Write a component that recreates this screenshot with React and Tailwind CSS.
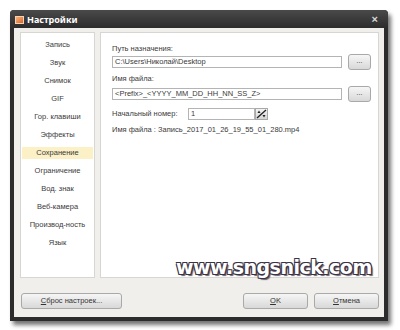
import React from 'react';

const menu = [
  'Запись',
  'Звук',
  'Снимок',
  'GIF',
  'Гор. клавиши',
  'Эффекты',
  'Сохранение',
  'Ограничение',
  'Вод. знак',
  'Веб-камера',
  'Производ-ность',
  'Язык',
];

const btn =
  'h-[16px] rounded-[3px] border border-[#a9a9a9] bg-gradient-to-b from-[#f6f6f6] to-[#d8d8d8] text-[7.5px] text-[#333] flex items-center justify-center';

const DotsButton = () => (
  <div className={`${btn} w-[23px] h-[15px] text-[7px] leading-none pb-[2px]`}>...</div>
);

const App = () => {
  return (
    <div className="relative w-[400px] h-[330px] bg-white pl-[10px] pt-[10px] font-['Liberation_Sans',sans-serif] text-[#3a3a3a]">
      {/* Window */}
      <div className="w-[378px] h-[311px] bg-[#2c2c2c] rounded-t-[4px] shadow-[3px_4px_4px_rgba(0,0,0,0.55)] flex flex-col px-[4px] pb-[4px]">
        {/* Title bar */}
        <div className="h-[18px] flex items-center bg-gradient-to-b from-[#4a4a4a] to-[#2c2c2c] -mx-[4px] px-[5px] rounded-t-[4px]">
          <div className="w-[9px] h-[8px] bg-gradient-to-br from-[#f6b27a] to-[#d8642a] border border-[#f3d2b0] mr-[3px] mt-[1px]" />
          <span className="text-[9px] font-bold text-white leading-none font-['Noto_Sans',sans-serif]">Настройки</span>
          <span className="ml-auto mr-[5px] text-[11px] font-bold text-[#d8d8d8] leading-none">×</span>
        </div>

        {/* Body */}
        <div className="flex-1 bg-[#f0efeb] flex flex-col pl-[6px] pr-[5px] pt-[4px]">
          <div className="flex gap-[5px] h-[246px]">
            {/* Left list */}
            <div className="w-[75px] h-full bg-white border border-[#d6d6d2] pt-[3px] px-[1px]">
              {menu.map((item) => (
                <div key={item} className="h-[18px] flex items-center">
                  <div
                    className={`w-full h-[12px] flex items-center justify-center text-[7.5px] leading-none ${
                      item === 'Сохранение' ? 'bg-[#fbf0c6]' : ''
                    }`}
                  >
                    {item}
                  </div>
                </div>
              ))}
            </div>

            {/* Right content */}
            <div className="flex-1 h-full bg-white border border-[#d6d6d2] pl-[11px] pr-[7px] flex flex-col text-[7.5px] whitespace-nowrap">
              <div className="mt-[11px] h-[10px] leading-[10px]">Путь назначения:</div>
              <div className="h-[15px] flex items-center gap-[6px]">
                <div className="flex-1 h-[12px] border border-[#b4b4b4] bg-white px-[2px] leading-[10px]">
                  C:\Users\Николай\Desktop
                </div>
                <DotsButton />
              </div>

              <div className="mt-[5px] h-[10px] leading-[10px]">Имя файла:</div>
              <div className="mt-[2px] h-[15px] flex items-center gap-[6px]">
                <div className="flex-1 h-[12px] border border-[#b4b4b4] bg-white px-[2px] leading-[10px]">
                  {'<Prefix>_<YYYY_MM_DD_HH_NN_SS_Z>'}
                </div>
                <DotsButton />
              </div>

              <div className="mt-[7px] h-[12px] flex items-center">
                <span className="w-[76px] leading-[10px]">Начальный номер:</span>
                <div className="w-[67px] h-[12px] border border-[#b4b4b4] bg-white px-[2px] leading-[10px]">1</div>
                <div className="w-[13px] h-[12px] border border-[#a9a9a9] bg-gradient-to-b from-[#f4f4f4] to-[#d6d6d6] flex items-center justify-center">
                  <svg width="11" height="10" viewBox="0 0 11 10">
                    <path d="M1 9 L10 1" stroke="#222" strokeWidth="1.3" />
                    <path d="M1.5 4 L3 1.5 L4.5 4 Z" fill="#222" />
                    <path d="M6.5 6 L8 8.5 L9.5 6 Z" fill="#222" />
                  </svg>
                </div>
              </div>

              <div className="mt-[5px] h-[10px] leading-[10px]">Имя файла : Запись_2017_01_26_19_55_01_280.mp4</div>
            </div>
          </div>

          {/* Bottom buttons */}
          <div className="mt-[15px] flex">
            <div className={`${btn} w-[101px] ml-[1px]`}>
              <span><span className="underline">С</span>брос настроек...</span>
            </div>
            <div className={`${btn} w-[65px] ml-auto`}>
              <span><span className="underline">O</span>K</span>
            </div>
            <div className={`${btn} w-[65px] ml-[6px]`}>
              <span><span className="underline">О</span>тмена</span>
            </div>
          </div>
        </div>
      </div>

      {/* Watermark */}
      <div className="absolute left-[176px] top-[253px] text-[19px] font-bold font-['DejaVu_Sans',sans-serif] text-white tracking-[-0.5px] [text-shadow:1px_1px_0_#3b3344,-1px_-1px_0_#3b3344,1px_-1px_0_#3b3344,-1px_1px_0_#3b3344,2px_2px_1px_#6a6070]">
        www.sngsnick.com
      </div>
    </div>
  );
};

export default App;
